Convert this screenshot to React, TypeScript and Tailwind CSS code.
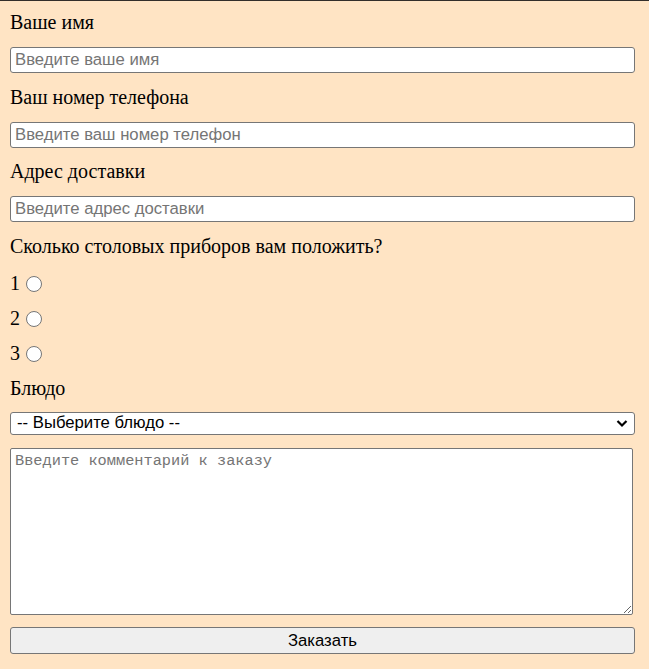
import React from "react";

const serif = { fontFamily: '"Liberation Serif", "Times New Roman", serif' };

function Label({ children }: { children: React.ReactNode }) {
  return (
    <div className="text-[20px] leading-[23px] text-black font-['Liberation_Serif',serif]">
      {children}
    </div>
  );
}

function TextInput({ placeholder }: { placeholder: string }) {
  return (
    <input
      type="text"
      placeholder={placeholder}
      className="block mt-[13px] mb-[12.5px] w-[625px] h-[26px] px-[4px] bg-white border border-[#767676] rounded-[3px] text-[16.7px] text-black placeholder:text-[#757575] font-['Liberation_Sans',Arial,sans-serif] outline-none"
    />
  );
}

function Radio({ n }: { n: number }) {
  return (
    <div className="flex items-center h-[23px] mb-[12px] text-[20px] leading-[23px] text-black font-['Liberation_Serif',serif]">
      <span>{n}</span>
      <span className="ml-[6px] mt-[2px] w-[16px] h-[16px] rounded-full border border-[#767676] bg-white box-border" />
    </div>
  );
}

export default function App() {
  return (
    <div className="min-h-[669px] w-[649px] bg-[#ffe4c4] border-t border-[#332e2a] pt-[10px] pl-[10px]" style={serif}>
      <Label>Ваше имя</Label>
      <TextInput placeholder="Введите ваше имя" />
      <Label>Ваш номер телефона</Label>
      <TextInput placeholder="Введите ваш номер телефон" />
      <Label>Адрес доставки</Label>
      <TextInput placeholder="Введите адрес доставки" />
      <div className="mb-[14px]">
        <Label>Сколько столовых приборов вам положить?</Label>
      </div>
      <Radio n={1} />
      <Radio n={2} />
      <Radio n={3} />
      <div className="mt-[3px]">
        <Label>Блюдо</Label>
      </div>
      <div className="relative mt-[12px] w-[625px] h-[23px] bg-white border border-[#767676] rounded-[3px] flex items-center pl-[6px] text-[16.7px] text-black font-['Liberation_Sans',Arial,sans-serif]">
        <span>-- Выберите блюдо --</span>
        <svg className="absolute right-[6px] top-[6px]" width="12" height="9" viewBox="0 0 12 9">
          <path d="M1.5 2 L6 6.5 L10.5 2" fill="none" stroke="#000" strokeWidth="2.2" />
        </svg>
      </div>
      <textarea
        placeholder="Введите комментарий к заказу"
        className="block mt-[13px] w-[623px] h-[167px] px-[4px] py-[3px] bg-white border border-[#767676] rounded-[2px] text-[15.3px] leading-[19px] text-black placeholder:text-[#757575] font-['Liberation_Mono',monospace] outline-none"
      />
      <button className="block mt-[12px] w-[625px] h-[27px] bg-[#efefef] border border-[#767676] rounded-[3px] text-[16.7px] text-black font-['Liberation_Sans',Arial,sans-serif]">
        Заказать
      </button>
    </div>
  );
}
